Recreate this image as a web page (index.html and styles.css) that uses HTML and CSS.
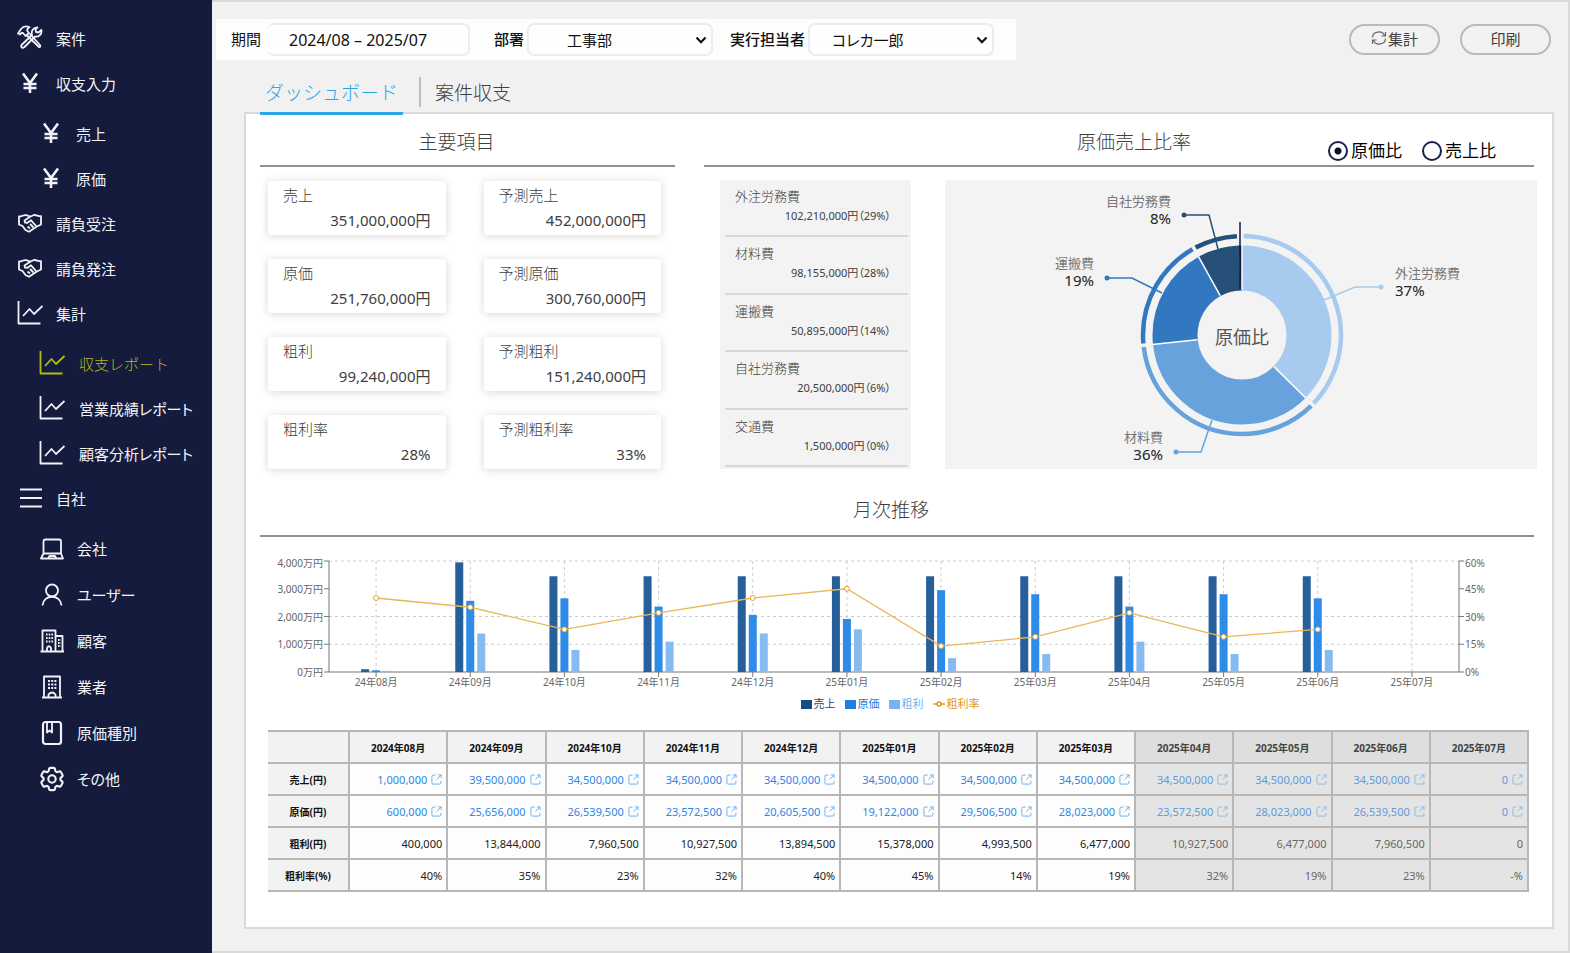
FILE: index.html
```html
<!DOCTYPE html>
<html lang="ja">
<head>
<meta charset="utf-8">
<meta name="viewport" content="width=device-width, initial-scale=1">
<title>収支レポート</title>
<link rel="stylesheet" href="styles.css">
</head>
<body>
<svg class="defs" aria-hidden="true">
  <symbol id="i-tools" viewBox="0 0 26 26">
    <path d="M1 8.500 3 9.500 4.500 7.800 6 8 8.500 11 12 8 10 5.500C10 3.500 11 3 12.500 2.200 9 .6 6 1.500 4 4Z"/>
    <path d="M9.500 10 21.500 21.500C22.500 23 24 21.500 23 20L12.500 8.500"/>
    <path d="M6.200 22.800C4.500 23 3.800 21.500 4.500 20L15 10C14 6 16 2.500 20.500 2.300L18.500 4.500 19 7 21.500 7.500 24.300 4.800C25.500 9 21.500 12.500 18 11.500L7.500 22Z"/>
  </symbol>
  <symbol id="i-yen" viewBox="0 0 26 26"><path d="M6 3.500 13 13 20 3.500M13 13V23M6.500 14H19.500M6.500 18H19.500" stroke-width="2.600"/></symbol>
  <symbol id="i-hand" viewBox="0 0 26 26">
    <path d="M2 6.500C5 6.800 6.500 4.500 9 5.200L13.500 6.500 17 5C19.500 4.800 21.500 6.500 24 6.200V14.500L19.500 16.800 12 21.800 8.500 20 5.500 16 2 14.500Z"/>
    <path d="M13.500 6.500 7.500 10.500 8 12.500 10.500 12.800 14 10.300 19.500 16.500M10.500 16.500 13 18.500M13 14 16.500 17.500"/>
  </symbol>
  <symbol id="i-chart" viewBox="0 0 26 26"><path d="M1.500 1V23.500H23.500M6 16 12.500 9 17 14 25.500 6"/></symbol>
  <symbol id="i-menu" viewBox="0 0 26 26"><path d="M3 4.500H25M3 13H25M3 21.500H25" stroke-width="2.200"/></symbol>
  <symbol id="i-pc" viewBox="0 0 26 26"><path d="M4.500 17.500V5.500Q4.500 3.500 6.500 3.500H20Q22 3.500 22 5.500V17.500M4.500 17.500H22L24 22.500H2Z M9.500 22 10.500 20H16L17 22"/></symbol>
  <symbol id="i-user" viewBox="0 0 26 26"><circle cx="13" cy="8.500" r="6"/><path d="M3.500 23.500C4.500 11.800 21.500 11.800 22.500 23.500"/></symbol>
  <symbol id="i-city" viewBox="0 0 26 26">
    <path d="M3.500 23V2.500H16.500V23M16.500 8H23.500V23M1.500 23.500H25M8 23V20Q10 16.500 12 20V23"/>
    <path d="M7 6.500H14M7 10H14M7 13.500H14M19 12H22M19 15H22M19 18H22" stroke-dasharray="1.600 1.100"/>
  </symbol>
  <symbol id="i-bldg" viewBox="0 0 26 26">
    <path d="M5 23V2.500H21V23M3 23.500H23M9.500 23V20.500Q13 16.500 16.500 20.500V23"/>
    <path d="M9 7H17.500M9 10.500H17.500M9 14H17.500" stroke-dasharray="2 1.200" stroke-width="2"/>
  </symbol>
  <symbol id="i-book" viewBox="0 0 26 26"><rect x="4" y="2" width="18" height="22" rx="2.500" stroke-width="2.200"/><path d="M8 3V12.500L10.500 10.500 13 12.500V3"/></symbol>
  <symbol id="i-gear" viewBox="1.500 1.500 21 21">
    <path stroke-width="1.700" d="M9.594 3.940c.09-.542.56-.94 1.110-.94h2.593c.55 0 1.020.398 1.110.94l.213 1.281c.063.374.313.686.645.87.074.04.147.083.22.127.325.196.72.257 1.075.124l1.217-.456a1.125 1.125 0 0 1 1.370.49l1.296 2.247a1.125 1.125 0 0 1-.26 1.431l-1.003.827c-.293.241-.438.613-.43.992a7.723 7.723 0 0 1 0 .255c-.008.378.137.75.43.991l1.004.827c.424.35.534.955.26 1.430l-1.298 2.247a1.125 1.125 0 0 1-1.369.491l-1.217-.456c-.355-.133-.75-.072-1.076.124a6.470 6.470 0 0 1-.22.128c-.331.183-.581.495-.644.869l-.213 1.281c-.09.543-.56.94-1.110.94h-2.594c-.55 0-1.019-.398-1.110-.94l-.213-1.281c-.062-.374-.312-.686-.644-.87a6.520 6.520 0 0 1-.22-.127c-.325-.196-.72-.257-1.076-.124l-1.217.456a1.125 1.125 0 0 1-1.369-.49l-1.297-2.247a1.125 1.125 0 0 1 .26-1.431l1.004-.827c.292-.24.437-.613.43-.991a6.932 6.932 0 0 1 0-.255c.007-.38-.138-.751-.43-.992l-1.004-.827a1.125 1.125 0 0 1-.26-1.430l1.297-2.247a1.125 1.125 0 0 1 1.370-.491l1.216.456c.356.133.751.072 1.076-.124.072-.044.146-.086.22-.128.332-.183.582-.495.644-.869l.214-1.280Z"/>
    <circle cx="12" cy="12" r="3" stroke-width="1.700"/>
  </symbol>
  <symbol id="i-ext" viewBox="0 0 12 12"><path d="M5 1.200H2.200Q1 1.200 1 2.400V9.800Q1 11 2.200 11H9.600Q10.800 11 10.800 9.800V7.500M7.500 1H11V4.500M11 1 6 6"/></symbol>
</svg>

<div class="app">
  <nav class="side" aria-label="メニュー">
    <ul class="menu">
      <li><a href="#"><svg class="ico"><use href="#i-tools"/></svg>案件</a></li>
      <li><a href="#"><svg class="ico"><use href="#i-yen"/></svg>収支入力</a>
        <ul class="sub">
          <li><a href="#"><svg class="ico"><use href="#i-yen"/></svg>売上</a></li>
          <li><a href="#"><svg class="ico"><use href="#i-yen"/></svg>原価</a></li>
        </ul>
      </li>
      <li><a href="#"><svg class="ico"><use href="#i-hand"/></svg>請負受注</a></li>
      <li><a href="#"><svg class="ico"><use href="#i-hand"/></svg>請負発注</a></li>
      <li><a href="#"><svg class="ico"><use href="#i-chart"/></svg>集計</a>
        <ul class="sub reports">
          <li><a href="#" class="current" aria-current="page"><svg class="ico"><use href="#i-chart"/></svg>収支レポート</a></li>
          <li><a href="#"><svg class="ico"><use href="#i-chart"/></svg>営業成績レポート</a></li>
          <li><a href="#"><svg class="ico"><use href="#i-chart"/></svg>顧客分析レポート</a></li>
        </ul>
      </li>
      <li><a href="#"><svg class="ico"><use href="#i-menu"/></svg>自社</a>
        <ul class="sub company">
          <li><a href="#"><svg class="ico"><use href="#i-pc"/></svg>会社</a></li>
          <li><a href="#"><svg class="ico"><use href="#i-user"/></svg>ユーザー</a></li>
          <li><a href="#"><svg class="ico"><use href="#i-city"/></svg>顧客</a></li>
          <li><a href="#"><svg class="ico"><use href="#i-bldg"/></svg>業者</a></li>
          <li><a href="#"><svg class="ico"><use href="#i-book"/></svg>原価種別</a></li>
          <li><a href="#"><svg class="ico"><use href="#i-gear"/></svg>その他</a></li>
        </ul>
      </li>
    </ul>
  </nav>

  <main class="main">
    <header class="top">
      <form class="filters">
        <label for="period">期間</label>
        <input id="period" class="field period" type="text" value="2024/08 – 2025/07">
        <label for="dept" class="strong">部署</label>
        <span class="pick">
          <select id="dept" class="field dept"><option>工事部</option></select>
          <svg class="arrow" viewBox="0 0 12 8"><path d="M1.500 1.500 6 6.200 10.500 1.500"/></svg>
        </span>
        <label for="person" class="strong">実行担当者</label>
        <span class="pick">
          <select id="person" class="field person"><option>コレカ一郎</option></select>
          <svg class="arrow" viewBox="0 0 12 8"><path d="M1.500 1.500 6 6.200 10.500 1.500"/></svg>
        </span>
      </form>
      <div class="actions">
        <button type="button" class="pill"><svg class="refresh" viewBox="0 0 16 14"><path d="M1.500 6.500A6.200 5.500 0 0 1 13.500 4.500M14.500 1V5H10.500M14.500 7.500A6.200 5.500 0 0 1 2.500 9.500M1.500 13V9H5.500"/></svg>集計</button>
        <button type="button" class="pill">印刷</button>
      </div>
    </header>

    <nav class="tabs" aria-label="表示切替">
      <a href="#" class="tab on">ダッシュボード</a>
      <a href="#" class="tab">案件収支</a>
    </nav>

    <div class="panel">
      <div class="upper">
        <section>
          <div class="head"><h2 class="title">主要項目</h2></div>
          <dl class="kpis">
            <div class="kpi"><dt>売上</dt><dd>351,000,000円</dd></div>
            <div class="kpi"><dt>予測売上</dt><dd>452,000,000円</dd></div>
            <div class="kpi"><dt>原価</dt><dd>251,760,000円</dd></div>
            <div class="kpi"><dt>予測原価</dt><dd>300,760,000円</dd></div>
            <div class="kpi"><dt>粗利</dt><dd>99,240,000円</dd></div>
            <div class="kpi"><dt>予測粗利</dt><dd>151,240,000円</dd></div>
            <div class="kpi"><dt>粗利率</dt><dd>28%</dd></div>
            <div class="kpi"><dt>予測粗利率</dt><dd>33%</dd></div>
          </dl>
        </section>

        <section>
          <div class="head split">
            <h2 class="title">原価売上比率</h2>
            <div class="modes">
              <label><input type="radio" name="mode" checked>原価比</label>
              <label><input type="radio" name="mode">売上比</label>
            </div>
          </div>
          <div class="ratio">
            <dl class="costs">
              <div class="cost"><dt>外注労務費</dt><dd>102,210,000円（29%）</dd></div>
              <div class="cost"><dt>材料費</dt><dd>98,155,000円（28%）</dd></div>
              <div class="cost"><dt>運搬費</dt><dd>50,895,000円（14%）</dd></div>
              <div class="cost"><dt>自社労務費</dt><dd>20,500,000円（6%）</dd></div>
              <div class="cost"><dt>交通費</dt><dd>1,500,000円（0%）</dd></div>
            </dl>
            <div class="donut">
              <svg viewBox="0 0 592 289" role="img" aria-label="原価比">
                <g fill="none" transform="rotate(-90 297 155)" stroke-width="45">
                  <circle cx="297" cy="155" r="67" pathLength="360" stroke="#a6cbef" stroke-dasharray="134.700 225.300"/>
                  <circle cx="297" cy="155" r="67" pathLength="360" stroke="#67a2dc" stroke-dasharray="0 134.700 129.300 96"/>
                  <circle cx="297" cy="155" r="67" pathLength="360" stroke="#3278c0" stroke-dasharray="0 264 67 29"/>
                  <circle cx="297" cy="155" r="67" pathLength="360" stroke="#265078" stroke-dasharray="0 331 27 2"/>
                  <circle cx="297" cy="155" r="67" pathLength="360" stroke="#0f1440" stroke-dasharray="0 358 2 0"/>
                </g>
                <g stroke="#ffffff" stroke-width="1.500">
                  <path d="M297 110V65"/>
                  <path d="M297 110V65" transform="rotate(134.700 297 155)"/>
                  <path d="M297 110V65" transform="rotate(264 297 155)"/>
                  <path d="M297 110V65" transform="rotate(331 297 155)"/>
                </g>
                <g fill="none" transform="rotate(-90 297 155)" stroke-width="4.500">
                  <circle cx="297" cy="155" r="99" pathLength="360" stroke="#a6cbef" stroke-dasharray="0 1 132.700 226.300"/>
                  <circle cx="297" cy="155" r="99" pathLength="360" stroke="#67a2dc" stroke-dasharray="0 135.700 127.300 97"/>
                  <circle cx="297" cy="155" r="99" pathLength="360" stroke="#3278c0" stroke-dasharray="0 265 65 30"/>
                  <circle cx="297" cy="155" r="99" pathLength="360" stroke="#265078" stroke-dasharray="0 332 25 3"/>
                </g>
                <path d="M295 42V110" stroke="#1a1c46" stroke-width="1.500"/>
                <g fill="none" stroke-width="1.500">
                  <path stroke="#a6cbef" d="M379 120 410 107H436"/>
                  <path stroke="#265078" d="M273 69 264 35H239"/>
                  <path stroke="#3278c0" d="M217 113 187 98H162"/>
                  <path stroke="#67a2dc" d="M267 240 256 272H231"/>
                </g>
                <circle cx="436" cy="107" r="2.500" fill="#a6cbef"/>
                <circle cx="239" cy="35" r="2.500" fill="#265078"/>
                <circle cx="162" cy="98" r="2.500" fill="#3278c0"/>
                <circle cx="231" cy="272" r="2.500" fill="#67a2dc"/>
                <g class="d-name">
                  <text x="450" y="98">外注労務費</text>
                  <text x="226" y="26" text-anchor="end">自社労務費</text>
                  <text x="149" y="88" text-anchor="end">運搬費</text>
                  <text x="218" y="262" text-anchor="end">材料費</text>
                </g>
                <g class="d-pct">
                  <text x="450" y="116">37%</text>
                  <text x="226" y="44" text-anchor="end">8%</text>
                  <text x="149" y="106" text-anchor="end">19%</text>
                  <text x="218" y="280" text-anchor="end">36%</text>
                </g>
                <text class="d-mid" x="297" y="164" text-anchor="middle">原価比</text>
              </svg>
            </div>
          </div>
        </section>
      </div>

      <section class="monthly">
        <div class="head"><h2 class="title">月次推移</h2></div>
        <svg id="trend" class="trend" viewBox="0 0 1274 140" role="img" aria-label="月次推移"></svg>
        <ul class="legend">
          <li class="sales"><i class="sw"></i>売上</li>
          <li class="cost-k"><i class="sw"></i>原価</li>
          <li class="profit"><i class="sw"></i>粗利</li>
          <li class="rate"><svg width="12" height="8" viewBox="0 0 12 8"><path d="M0 4H12"/><circle cx="6" cy="4" r="2"/></svg>粗利率</li>
        </ul>
        <table class="grid" id="grid"></table>
      </section>
    </div>
  </main>
</div>
<script src="app.js"></script>
</body>
</html>
```

FILE: styles.css
```css
* { box-sizing: border-box; }

body {
  margin: 0;
  background: #f1f1f1;
  color: #404040;
  font-family: "Noto Sans", "Noto Sans CJK JP", sans-serif;
  font-size: 15px;
  font-feature-settings: "palt";
}

ul, dl, dd, h2 { margin: 0; padding: 0; }
ul { list-style: none; }
a { color: inherit; text-decoration: none; }
input, select, button { font: inherit; color: inherit; font-feature-settings: inherit; }

.defs { display: none; }
.app { display: flex; min-height: 100vh; }

/* sidebar */
.side {
  flex: none;
  width: 212px;
  padding-top: 16px;
  background: #151b3d;
  color: #f2f3f8;
}
.menu a {
  display: flex;
  align-items: center;
  gap: 13px;
  height: 45px;
  padding: 0 0 1px 17px;
  white-space: nowrap;
}
.menu .sub { padding-top: 5px; }
.menu .sub a { padding-left: 38px; gap: 12px; }
.menu .reports a { padding-left: 39px; gap: 14px; }
.menu .company a { height: 46px; padding-left: 39px; }
.menu a.current { color: #b3bd12; font-weight: 300; font-feature-settings: normal; }
.ico {
  width: 26px;
  height: 26px;
  flex: none;
  fill: none;
  stroke: currentColor;
  stroke-width: 1.8;
  stroke-linejoin: round;
}

/* main column */
.main {
  flex: 1;
  min-width: 0;
  display: flex;
  flex-direction: column;
  padding: 17px 0 22px;
  border: 2px solid #d9d9d9;
  border-left: 0;
}
.top {
  display: flex;
  justify-content: space-between;
  align-items: center;
  padding: 0 17px 0 4px;
}
.filters {
  display: flex;
  align-items: center;
  height: 41px;
  padding: 0 22px 0 15px;
  background: #fdfdfd;
  color: #111;
}
.filters label { padding-bottom: 3px; }
.filters .strong { font-weight: 500; }
.field {
  height: 33px;
  border: 2px solid #e8ecf3;
  border-radius: 7px;
  background: #fefefe;
  outline: 0;
}
.period {
  width: 203px;
  margin: 0 24px 0 6px;
  padding: 1px 0 0 22px;
  border-left: 0;
  font-size: 16px;
}
.pick { position: relative; display: flex; margin: 0 17px 0 3px; }
.pick:last-child { margin-right: 0; }
.pick select { width: 186px; appearance: none; }
.dept { padding-left: 38px; }
.person { padding-left: 22px; }
.arrow {
  position: absolute;
  right: 6px;
  top: 13px;
  width: 12px;
  height: 8px;
  fill: none;
  stroke: #111;
  stroke-width: 2.2;
  pointer-events: none;
}
.actions { display: flex; gap: 20px; }
.pill {
  display: flex;
  align-items: center;
  justify-content: center;
  gap: 1px;
  width: 91px;
  height: 31px;
  padding: 0 0 3px;
  border: 2px solid #bababa;
  border-radius: 16px;
  background: #f2f2f2;
}
.refresh { width: 16px; height: 14px; fill: none; stroke: #666; stroke-width: 1.2; }

.tabs {
  position: relative;
  display: flex;
  margin: 12px 0 -3px 48px;
  font-size: 19px;
  font-weight: 300;
}
.tab {
  display: flex;
  align-items: center;
  height: 43px;
  padding: 0 6px;
  border-bottom: 3px solid transparent;
}
.tab.on { min-width: 143px; justify-content: center; color: #2ba6ea; border-color: #2ba6ea; font-feature-settings: normal; padding: 0; }
.tab.on + .tab { gap: 14px; padding-left: 16px; }
.tab.on + .tab::before { content: ""; width: 2px; height: 30px; background: #bdbdbd; }

.panel {
  flex: 1;
  margin: 0 14px 0 32px;
  padding: 0 18px 33px 14px;
  border: 2px solid #d9d9d9;
  background: #fff;
}
.upper { display: grid; grid-template-columns: 1fr 2fr; gap: 29px; }

.head {
  height: 53px;
  padding: 5px 22px 0 0;
  display: grid;
  align-items: center;
  justify-content: center;
  border-bottom: 2px solid #919191;
}
.title { font-size: 19px; font-weight: 300; line-height: 28px; }
.split { grid-template-columns: 1fr auto 1fr; padding: 5px 0 0 30px; }
.split .title { grid-column: 2; }
.modes {
  display: flex;
  justify-content: flex-end;
  gap: 20px;
  padding: 18px 38px 0 0;
  font-size: 17px;
  line-height: 20px;
  color: #000;
}
.modes label { display: flex; align-items: center; gap: 3px; white-space: nowrap; }
.modes input {
  appearance: none;
  width: 20px;
  height: 20px;
  margin: 0;
  border: 2px solid #16224f;
  border-radius: 50%;
}
.modes input:checked { background: radial-gradient(circle, #0b1030 0 3px, transparent 4px); }

.kpis {
  display: grid;
  grid-template-columns: 1fr 1fr;
  gap: 24px 38px;
  padding: 14px 14px 0 8px;
}
.kpi {
  height: 54px;
  padding: 2px 15px 0;
  border-radius: 3px;
  background: #fff;
  box-shadow: 0 1px 10px rgba(0, 0, 0, 0.16);
  line-height: 25px;
}
.kpi dt { font-weight: 300; }
.kpi dd { text-align: right; }

.ratio { display: flex; gap: 34px; margin-right: -3px; padding: 13px 0 0 16px; }
.costs {
  flex: none;
  display: grid;
  grid-auto-rows: 1fr;
  width: 191px;
  padding: 0 3px 2px 5px;
  background: #f3f3f3;
}
.cost { padding: 6px 17px 0 10px; border-bottom: 2px solid #d8d8d8; }
.cost dt { font-size: 13px; font-weight: 300; line-height: 20px; }
.cost dd { font-size: 11px; line-height: 20px; text-align: right; white-space: nowrap; }
.donut { flex: 1; min-width: 0; background: #f3f3f3; }
.donut svg { display: block; width: 100%; font-feature-settings: normal; }
.d-name { font-size: 13px; fill: #777; }
.d-pct { font-size: 15px; fill: #222; }
.d-mid { font-size: 18px; fill: #555; }

/* monthly trend */
.monthly { padding-top: 15px; }
.monthly .head { padding: 0 12px 0 0; }
.trend { display: block; width: 100%; margin-top: 13px; font-size: 10px; fill: #666; }
.legend {
  display: flex;
  justify-content: center;
  gap: 9px;
  margin-top: 5px;
  padding-right: 14px;
  font-size: 11px;
  line-height: 18px;
}
.legend li { display: flex; align-items: center; gap: 2px; }
.sw { width: 11px; height: 9px; background: currentColor; }
.sales { color: #134b86; }
.cost-k { color: #1c7de4; }
.profit { color: #78b2f1; }
.rate { color: #e09a1a; }
.rate svg { fill: #fff; stroke: currentColor; stroke-width: 1.5; }

.grid {
  width: calc(100% - 13px);
  margin: 17px 5px 0 8px;
  border-collapse: collapse;
  table-layout: fixed;
  font-size: 11px;
  color: #222;
}
.grid th, .grid td { height: 32px; padding: 0; border: 2px solid #b7b7b7; }
.grid th { background: #f2f2f2; font-size: 10px; font-weight: 700; color: #111; }
.grid tr > :first-child { width: 81px; border-left: 0; }
.grid td { padding-right: 4px; text-align: right; background: #fdfdfd; }
.grid a { display: inline-flex; align-items: center; gap: 4px; color: #2f86e6; }
.grid svg { width: 11px; height: 11px; fill: none; stroke: #67abed; }
.grid th.next { background: #dedede; color: #444; }
.grid td.next { background: #e4e4e4; color: #666; }
.grid .next a { color: #5e9bde; }
.grid .next svg { stroke: #8ab8e6; }
```

FILE: app.js
```javascript
const months = [
  ["2024", "08", 1000000, 600000, 400000, 40],
  ["2024", "09", 39500000, 25656000, 13844000, 35],
  ["2024", "10", 34500000, 26539500, 7960500, 23],
  ["2024", "11", 34500000, 23572500, 10927500, 32],
  ["2024", "12", 34500000, 20605500, 13894500, 40],
  ["2025", "01", 34500000, 19122000, 15378000, 45],
  ["2025", "02", 34500000, 29506500, 4993500, 14],
  ["2025", "03", 34500000, 28023000, 6477000, 19],
  ["2025", "04", 34500000, 23572500, 10927500, 32],
  ["2025", "05", 34500000, 28023000, 6477000, 19],
  ["2025", "06", 34500000, 26539500, 7960500, 23],
  ["2025", "07", 0, 0, 0, null]
];
const firstFuture = 8;

/* chart */
const left = 69, right = 1199, top_ = 11, bottom = 122;
const step = (right - left) / months.length;
const yOf = ratio => bottom - ratio * (bottom - top_);
const colors = ["#265f99", "#2e8be8", "#86bbf2"];
let out = "";

[0.25, 0.5, 1].forEach(r => {
  out += `<path d="M${left} ${yOf(r)}H${right}" stroke="#ccc" stroke-dasharray="3 3"/>`;
});
months.forEach((m, i) => {
  const x = left + step * (i + 0.5);
  out += `<path d="M${x} ${top_}V${bottom}" stroke="#ccc" stroke-dasharray="3 3"/>`;
});
out += `<path d="M${left} ${top_}V${bottom}H${right}V${top_}" fill="none" stroke="#777"/>`;

const leftLabels = ["0万円", "1,000万円", "2,000万円", "3,000万円", "4,000万円"];
const rightLabels = ["0%", "15%", "30%", "45%", "60%"];
leftLabels.forEach((t, i) => {
  const y = yOf(i / 4);
  const ty = y + (i === 4 ? 6 : 4);
  out += `<path d="M${left - 5} ${y}H${left}M${right} ${y}H${right + 5}" stroke="#777"/>`;
  out += `<text x="${left - 6}" y="${ty}" text-anchor="end">${t}</text>`;
  out += `<text x="${right + 6}" y="${ty}">${rightLabels[i]}</text>`;
});
months.forEach((m, i) => {
  const x = left + step * (i + 0.5);
  [m[2], m[3], m[4]].forEach((v, k) => {
    const y = yOf(v / 40000000);
    out += `<rect x="${x - 15 + k * 11}" y="${y}" width="8" height="${bottom - y}" fill="${colors[k]}"/>`;
  });
  out += `<path d="M${x} ${bottom}v5" stroke="#777"/>`;
  out += `<text x="${x}" y="136" text-anchor="middle">${m[0].slice(2)}年${m[1]}月</text>`;
});
const points = months
  .map((m, i) => [left + step * (i + 0.5), m[5]])
  .filter(p => p[1] !== null)
  .map(p => [p[0], yOf(p[1] / 60)]);
out += `<polyline points="${points.join(" ")}" fill="none" stroke="#eab755" stroke-width="1.3"/>`;
points.forEach(p => {
  out += `<circle cx="${p[0]}" cy="${p[1]}" r="2.5" fill="#fff" stroke="#dda035"/>`;
});
document.getElementById("trend").innerHTML = out;

/* table */
const cls = i => (i >= firstFuture ? ' class="next"' : "");
const num = v => v.toLocaleString("en-US");
const link = v => `<a href="#">${num(v)}<svg><use href="#i-ext"/></svg></a>`;
const row = (name, cell) =>
  `<tr><th scope="row">${name}</th>` +
  months.map((m, i) => `<td${cls(i)}>${cell(m)}</td>`).join("") + "</tr>";

document.getElementById("grid").innerHTML =
  "<thead><tr><th></th>" +
  months.map((m, i) => `<th scope="col"${cls(i)}>${m[0]}年${m[1]}月</th>`).join("") +
  "</tr></thead><tbody>" +
  row("売上(円)", m => link(m[2])) +
  row("原価(円)", m => link(m[3])) +
  row("粗利(円)", m => num(m[4])) +
  row("粗利率(%)", m => (m[5] === null ? "-" : m[5]) + "%") +
  "</tbody>";
```
